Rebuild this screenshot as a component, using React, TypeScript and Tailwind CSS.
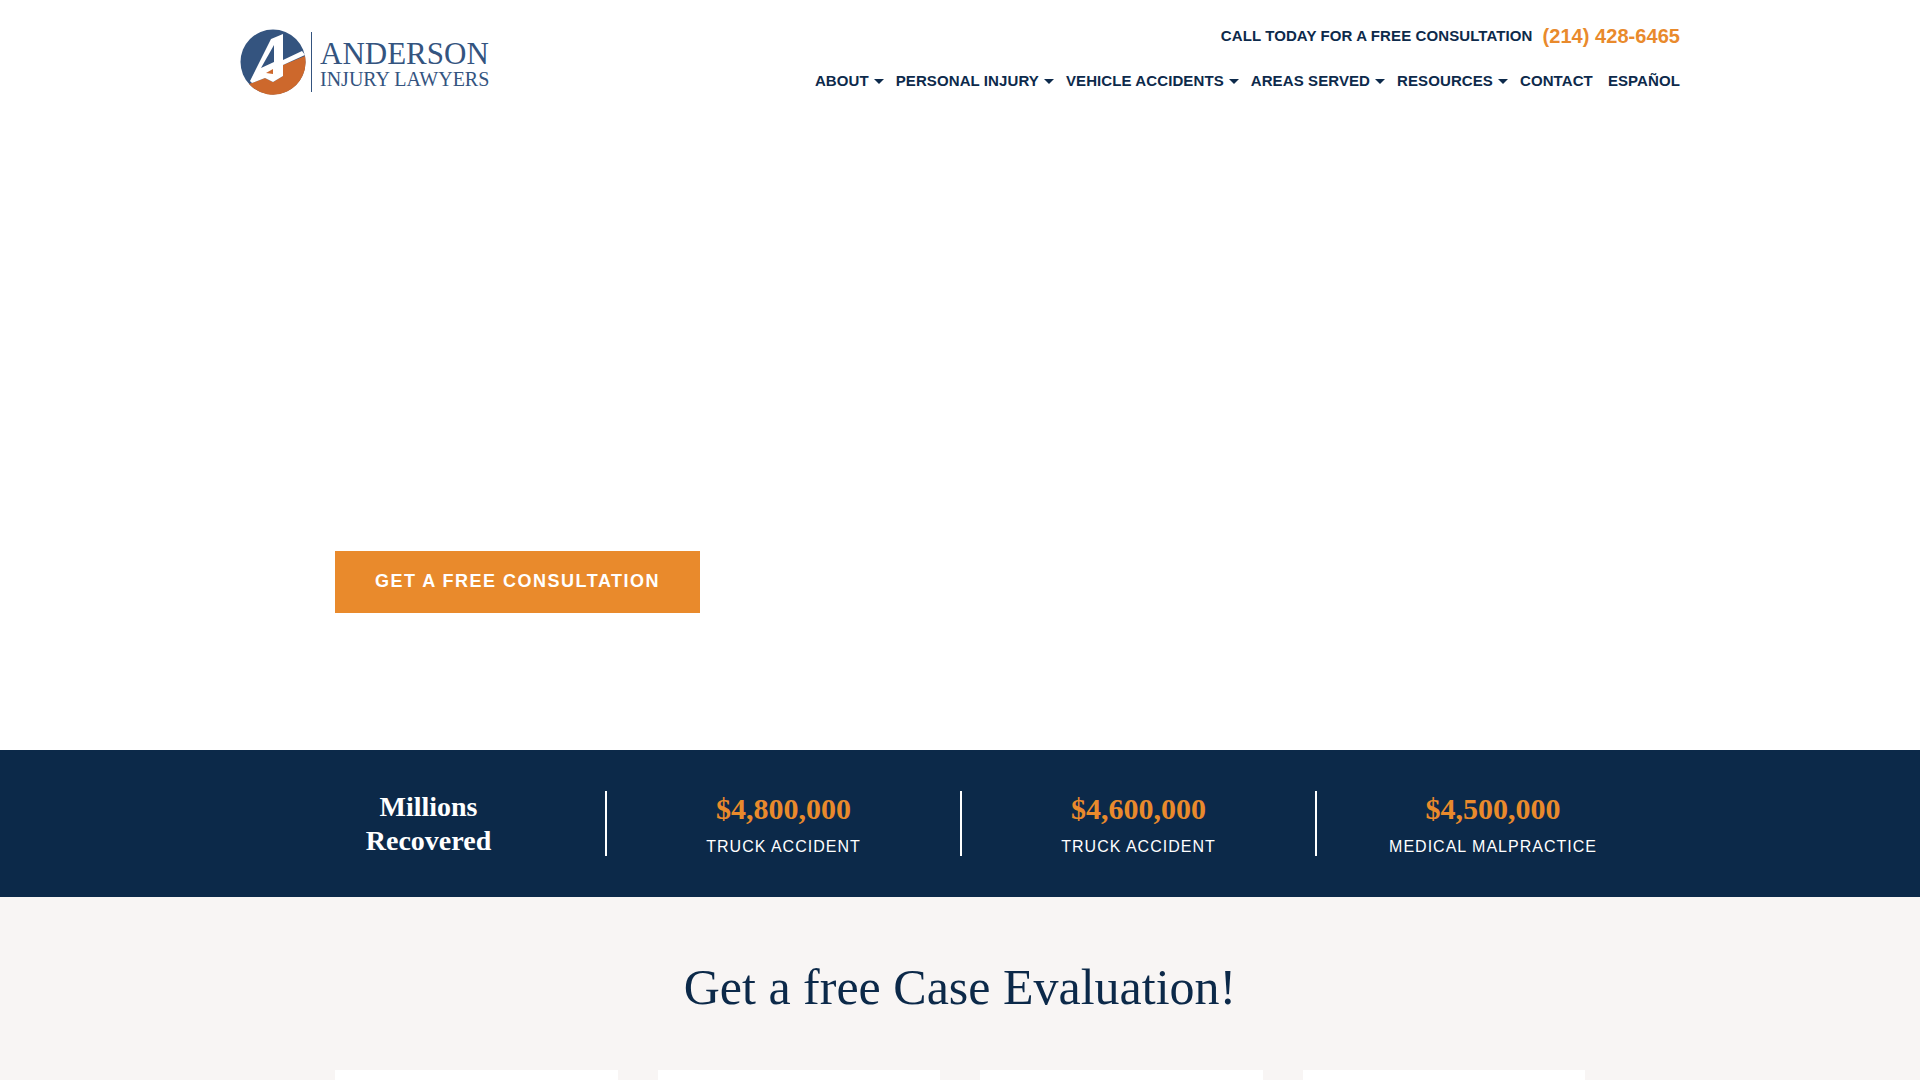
const NAV = [
  { label: 'ABOUT', caret: true },
  { label: 'PERSONAL INJURY', caret: true },
  { label: 'VEHICLE ACCIDENTS', caret: true },
  { label: 'AREAS SERVED', caret: true },
  { label: 'RESOURCES', caret: true },
  { label: 'CONTACT', caret: false },
  { label: 'ESPAÑOL', caret: false },
];

const RESULTS = [
  { amount: '$4,800,000', label: 'TRUCK ACCIDENT', width: 'w-[355px] border-r-2 border-white' },
  { amount: '$4,600,000', label: 'TRUCK ACCIDENT', width: 'w-[355px] border-r-2 border-white' },
  { amount: '$4,500,000', label: 'MEDICAL MALPRACTICE', width: 'w-[352px]' },
];

function LogoMark() {
  return (
    <svg width="66" height="66" viewBox="0 0 66 66" className="shrink-0">
      <circle cx="33" cy="33" r="32.5" fill="#34547f" />
      <path d="M9 55 L25 49 L33 53 L43 47 L43 36 L65 27 A32.5 32.5 0 0 1 9 55 Z" fill="#cd682c" />
      <path d="M10 52 L31 10 L43 5 L43 31 L62 22 L65 26 L43 36 L43 47 L33 53 L25 49 L12 54 Z" fill="#fff" />
      <path d="M34 16 L34 33 L21 39 Z" fill="#34547f" />
      <path d="M26 44 L33 40 L33 45 Z" fill="#cd682c" />
    </svg>
  );
}

export default function App() {
  return (
    <div className="min-h-screen overflow-hidden bg-white font-['Liberation_Sans',sans-serif]">
      <header className="flex h-[120px] items-start justify-between px-[240px]">
        <div className="mt-[29px] flex items-center">
          <LogoMark />
          <div className="ml-[5px] h-[60px] w-px bg-[#34547f]" />
          <div className="ml-[8px] self-start pt-[8px] font-['Liberation_Serif',serif] text-[#34547f]">
            <div className="text-[31px] leading-[34px]">ANDERSON</div>
            <div className="text-[20px] leading-[16px]">INJURY LAWYERS</div>
          </div>
        </div>
        <div className="flex flex-col items-end">
          <div className="mt-[21px] flex items-center gap-[10px] font-bold">
            <span className="text-[15px] tracking-[0.1px] text-[#0d2a4b]">CALL TODAY FOR A FREE CONSULTATION</span>
            <span className="text-[20px] tracking-[0.05px] text-[#e98a2c]">(214) 428-6465</span>
          </div>
          <nav className="mt-[19px] flex items-center gap-[12px] text-[15px] font-bold tracking-[0.1px] text-[#0d2a4b]">
            {NAV.map((item) => (
              <span key={item.label} className={`flex items-center gap-[5px] ${item.label === 'ESPAÑOL' ? 'ml-[3px]' : ''}`}>
                {item.label}
                {item.caret && <span className="h-0 w-0 border-x-[5px] border-t-[5px] border-x-transparent border-t-[#0d2a4b]" />}
              </span>
            ))}
          </nav>
        </div>
      </header>

      <section className="h-[630px] pl-[335px] pt-[431px]">
        <div className="flex h-[62px] w-[365px] items-center justify-center bg-[#e98a2c] pb-[2px] text-[18px] font-bold tracking-[1.5px] text-white">
          GET A FREE CONSULTATION
        </div>
      </section>

      <section className="flex h-[147px] items-center bg-[#0c2949] pl-[252px]">
        <div className="flex h-[65px]">
          <div className="flex w-[355px] items-center justify-center border-r-2 border-white text-center font-['Liberation_Serif',serif] text-[28px] leading-[34px] font-bold text-white">
            Millions<br />Recovered
          </div>
          {RESULTS.map((r) => (
            <div key={r.amount} className={`flex flex-col items-center text-center ${r.width}`}>
              <div className="font-['Liberation_Serif',serif] text-[30px] leading-[36px] font-bold text-[#e98a2c]">{r.amount}</div>
              <div className="mt-[9px] text-[16px] leading-[22px] tracking-[1px] text-white">{r.label}</div>
            </div>
          ))}
        </div>
      </section>

      <section className="bg-[#f8f5f4] pt-[60px]">
        <h2 className="text-center font-['Liberation_Serif',serif] text-[50px] leading-[60px] text-[#0c2949]">Get a free Case Evaluation!</h2>
        <div className="mx-auto mt-[53px] grid w-[1250px] grid-cols-4 gap-[40px]">
          <div className="h-[40px] bg-white" />
          <div className="h-[40px] bg-white" />
          <div className="h-[40px] bg-white" />
          <div className="h-[40px] bg-white" />
        </div>
      </section>
    </div>
  );
}
